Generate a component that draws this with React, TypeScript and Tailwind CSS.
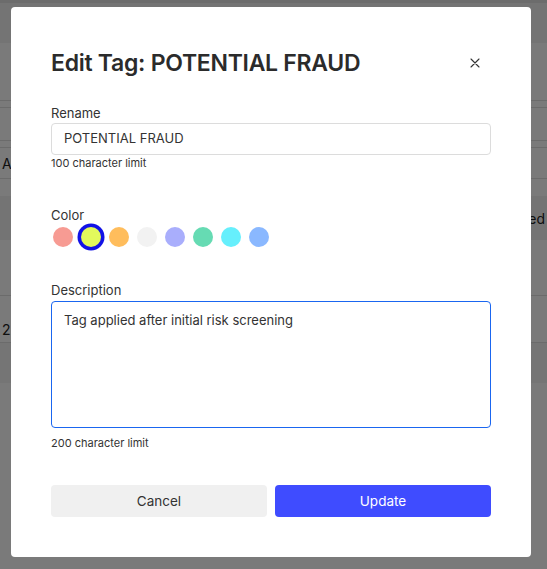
import React from "react";

const colors = ["#f79b93", "#e3f95c", "#ffbd5c", "#f2f2f2", "#a9aefc", "#66dbb3", "#66effc", "#8ab8ff"];

export default function App() {
  return (
    <div className="relative h-[569px] w-[547px] overflow-hidden bg-white font-['Inter',sans-serif] text-[#333]">
      {/* background page */}
      <div className="flex flex-col text-[14px] text-[#222]">
        <div className="h-[43px] border-t-[3px] border-[#e2e2e2] bg-[#f3f3f3]" />
        <div className="h-[57px]" />
        <div className="h-[8px] border-y border-[#e0e0e0]" />
        <div className="h-[32px]" />
        <div className="h-[8px] border-y border-[#e0e0e0]" />
        <div className="flex h-[31px] items-center border-b border-[#e0e0e0] pl-[2px]">A</div>
        <div className="h-[17px]" />
        <div className="flex h-[44px] items-center justify-end bg-[#f3f3f3] pr-[2px]">ed</div>
        <div className="h-[56px] border-b border-[#e0e0e0]" />
        <div className="flex h-[47px] items-center border-b border-[#e0e0e0] pl-[2px] pt-[20px]">25</div>
        <div className="h-[40px] bg-[#f5f5f5]" />
      </div>

      {/* overlay */}
      <div className="absolute inset-0 bg-black/[0.52] pl-[11px] pt-[7px]">
        <div className="flex h-[550px] w-[520px] flex-col rounded-[4px] bg-white px-10 pt-10 pb-10">
          <div className="flex h-8 items-center justify-between">
            <h2 className="text-[23px] font-semibold leading-8 tracking-[-0.012em] text-[#2b2b2b]">
              Edit Tag: POTENTIAL FRAUD
            </h2>
            <button className="mr-[11px] flex h-[10px] w-[10px] items-center justify-center">
              <svg width="10" height="10" viewBox="0 0 10 10" fill="none">
                <path d="M1 1L9 9M9 1L1 9" stroke="#333" strokeWidth="1.1" strokeLinecap="round" />
              </svg>
            </button>
          </div>

          <label className="mt-6 text-[13px] leading-5 text-[#333]">Rename</label>
          <div className="flex h-8 items-center rounded-[4px] border border-[#dcdcdc] px-3 text-[13px] text-[#333]">
            POTENTIAL FRAUD
          </div>
          <div className="text-[11px] leading-4 text-[#333]">100 character limit</div>

          <label className="mt-[34px] text-[13px] leading-5 text-[#333]">Color</label>
          <div className="mt-[2px] flex h-5 items-center gap-2 pl-[2px]">
            {colors.map((c, i) => (
              <span
                key={c}
                className={
                  i === 1
                    ? "h-5 w-5 rounded-full shadow-[0_0_0_3.5px_#1212e6]"
                    : "h-5 w-5 rounded-full"
                }
                style={{ backgroundColor: c }}
              />
            ))}
          </div>

          <label className="mt-[33px] text-[13px] leading-5 text-[#333]">Description</label>
          <div className="mt-[1px] h-[127px] rounded-[4px] border border-[#1a66f0] px-3 pt-[8px] text-[13px] leading-5 text-[#333]">
            Tag applied after initial risk screening
          </div>
          <div className="mt-[7px] text-[11px] leading-4 text-[#333]">200 character limit</div>

          <div className="mt-[34px] grid grid-cols-2 gap-2">
            <button className="h-8 rounded-[4px] bg-[#f0f0f0] text-[13.5px] text-[#333]">Cancel</button>
            <button className="h-8 rounded-[4px] bg-[#3f4cff] text-[13.5px] text-white">Update</button>
          </div>
        </div>
      </div>
    </div>
  );
}
